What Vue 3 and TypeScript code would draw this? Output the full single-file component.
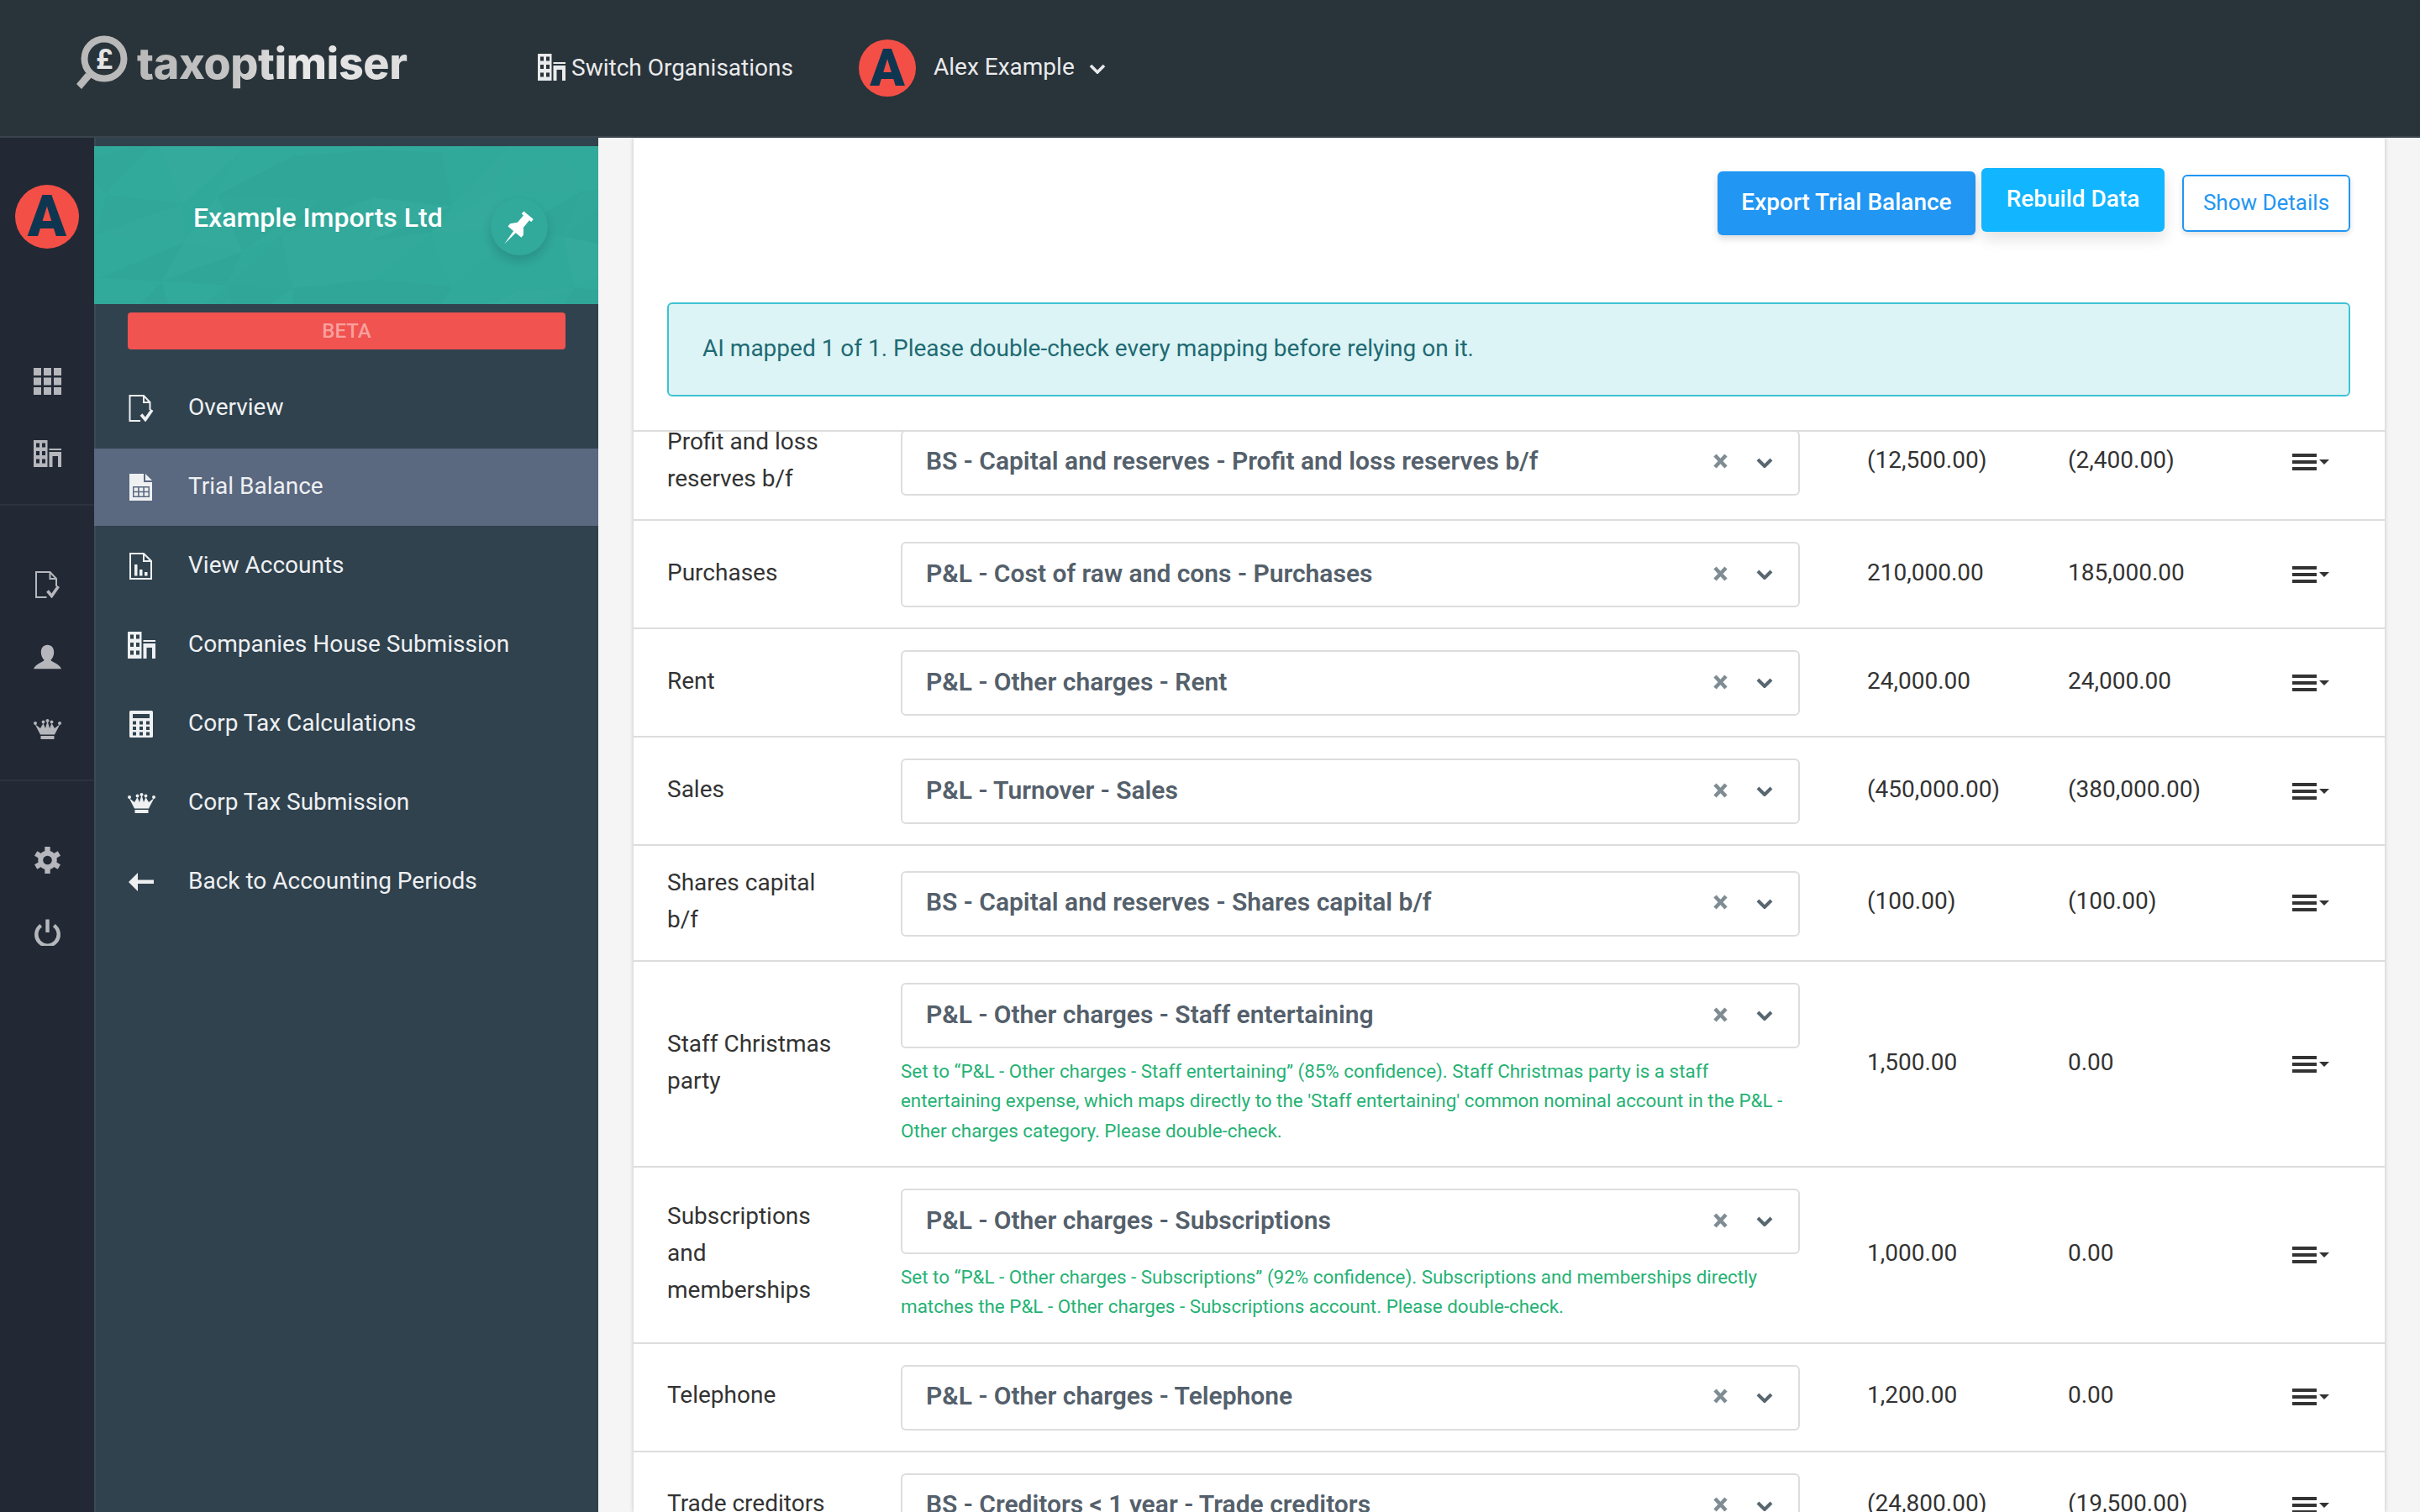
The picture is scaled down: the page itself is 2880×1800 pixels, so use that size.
<script setup lang="ts">
interface Row {
  label: string
  mapping: string
  current: string
  prior: string
  note?: string
}

const railTop = ['i-grid', 'i-building']
const railMid = ['i-doc-check', 'i-person', 'i-crown']
const railEnd = ['i-gear', 'i-power']

const navItems = [
  { label: 'Overview', icon: 'i-doc-check', w: 30, h: 32 },
  { label: 'Trial Balance', icon: 'i-doc-table', w: 30, h: 32, active: true },
  { label: 'View Accounts', icon: 'i-doc-chart', w: 30, h: 32 },
  { label: 'Companies House Submission', icon: 'i-building', w: 33, h: 32 },
  { label: 'Corp Tax Calculations', icon: 'i-calc', w: 30, h: 32 },
  { label: 'Corp Tax Submission', icon: 'i-crown', w: 33, h: 24 },
  { label: 'Back to Accounting Periods', icon: 'i-arrow', w: 30, h: 22 },
]

const rows: Row[] = [
  { label: 'Profit and loss reserves b/f', mapping: 'BS - Capital and reserves - Profit and loss reserves b/f', current: '(12,500.00)', prior: '(2,400.00)' },
  { label: 'Purchases', mapping: 'P&L - Cost of raw and cons - Purchases', current: '210,000.00', prior: '185,000.00' },
  { label: 'Rent', mapping: 'P&L - Other charges - Rent', current: '24,000.00', prior: '24,000.00' },
  { label: 'Sales', mapping: 'P&L - Turnover - Sales', current: '(450,000.00)', prior: '(380,000.00)' },
  { label: 'Shares capital b/f', mapping: 'BS - Capital and reserves - Shares capital b/f', current: '(100.00)', prior: '(100.00)' },
  {
    label: 'Staff Christmas party',
    mapping: 'P&L - Other charges - Staff entertaining',
    current: '1,500.00',
    prior: '0.00',
    note: "Set to “P&L - Other charges - Staff entertaining” (85% confidence). Staff Christmas party is a staff entertaining expense, which maps directly to the 'Staff entertaining' common nominal account in the P&L - Other charges category. Please double-check.",
  },
  {
    label: 'Subscriptions and memberships',
    mapping: 'P&L - Other charges - Subscriptions',
    current: '1,000.00',
    prior: '0.00',
    note: 'Set to “P&L - Other charges - Subscriptions” (92% confidence). Subscriptions and memberships directly matches the P&L - Other charges - Subscriptions account. Please double-check.',
  },
  { label: 'Telephone', mapping: 'P&L - Other charges - Telephone', current: '1,200.00', prior: '0.00' },
  { label: 'Trade creditors', mapping: 'BS - Creditors < 1 year - Trade creditors', current: '(24,800.00)', prior: '(19,500.00)' },
]

// low-poly texture behind the company name
function buildFacets() {
  let seed = 7
  const rnd = () => {
    seed = (seed * 16807) % 2147483647
    return seed / 2147483647
  }
  const pts: number[][][] = []
  for (let y = 0; y <= 4; y++) {
    const line: number[][] = []
    for (let x = 0; x <= 8; x++) {
      line.push([x * 80 - 20 + rnd() * 50, y * 55 - 14 + rnd() * 34])
    }
    pts.push(line)
  }
  const out: { points: string; fill: string }[] = []
  const shade = () => {
    const r = rnd()
    return r < 0.5 ? `rgba(255,255,255,${(r * 0.03).toFixed(3)})` : `rgba(0,60,50,${((r - 0.5) * 0.05).toFixed(3)})`
  }
  for (let y = 0; y < 4; y++) {
    for (let x = 0; x < 8; x++) {
      const [a, b, c, d] = [pts[y][x], pts[y][x + 1], pts[y + 1][x], pts[y + 1][x + 1]]
      out.push({ points: [a, b, c].map((p) => p.join(',')).join(' '), fill: shade() })
      out.push({ points: [b, d, c].map((p) => p.join(',')).join(' '), fill: shade() })
    }
  }
  return out
}
const facets = buildFacets()
</script>

<template>
  <svg class="sprite" aria-hidden="true">
    <defs>
      <symbol id="i-grid" viewBox="0 0 33 32">
        <path fill="currentColor" d="M0 0h9v9H0zM12 0h9v9h-9zM24 0h9v9h-9zM0 11.500h9v9H0zM12 11.500h9v9h-9zM24 11.500h9v9h-9zM0 23h9v9H0zM12 23h9v9h-9zM24 23h9v9h-9z" />
      </symbol>
      <symbol id="i-building" viewBox="0 0 33 32">
        <path fill="currentColor" fill-rule="evenodd" d="M0 0h16.500v32H0zM3 3.500v5h4v-5zM10 3.500v5h4v-5zM3 13v5h4v-5zM10 13v5h4v-5zM3 22.500v5h4v-5zM10 22.500v5h4v-5zM18.500 10H33v2H18.500zM18.500 14H33v18h-4V19h-6.500v13h-4z" />
      </symbol>
      <symbol id="i-doc-check" viewBox="0 0 30 32">
        <path fill="none" stroke="currentColor" stroke-width="2" d="M14 31H1.500V1H18l7.500 8v9M18 1v8h7.500" />
        <path fill="none" stroke="currentColor" stroke-width="3.600" d="M15 23.500l5 6 8-11.500" />
      </symbol>
      <symbol id="i-doc-table" viewBox="0 0 30 32">
        <path fill="currentColor" fill-rule="evenodd" d="M1 0h17v10h10v22H1zM20 0l8 8h-8zM5 15v13h20V15zM6.500 16.500h4.600v4.200H6.500zM12.700 16.500h4.600v4.200h-4.600zM18.900 16.500h4.600v4.200h-4.600zM6.500 22.300h4.600v4.200H6.500zM12.700 22.300h4.600v4.200h-4.600zM18.900 22.300h4.600v4.200h-4.600z" />
      </symbol>
      <symbol id="i-doc-chart" viewBox="0 0 30 32">
        <path fill="none" stroke="currentColor" stroke-width="2" d="M2 1h16l9 9v21H2zM18 1v9h9" />
        <path fill="currentColor" d="M7 14h3.500v13.500H7zM13 20h3.500v7.500H13zM19 23h3.500v4.500H19z" />
      </symbol>
      <symbol id="i-calc" viewBox="0 0 30 32">
        <path fill="currentColor" fill-rule="evenodd" d="M2.500 0h25A1.500 1.500 0 0 1 29 1.500v29a1.500 1.500 0 0 1-1.500 1.500h-25A1.500 1.500 0 0 1 1 30.500v-29A1.500 1.500 0 0 1 2.500 0zM5 4v5h20V4zM5 12.500v4h4v-4zM13 12.500v4h4v-4zM21 12.500v4h4v-4zM5 19v4h4v-4zM13 19v4h4v-4zM21 19v4h4v-4zM5 25.500v4h4v-4zM13 25.500v4h4v-4zM21 25.500v4h4v-4z" />
      </symbol>
      <symbol id="i-crown" viewBox="0 0 33 24">
        <path fill="currentColor" d="M1.500 6l6.500 12.500h17L31.500 6l-6.500 5-3.500-6-2.500 6-2.500-9-2.500 9-2.500-6L8 11zM8.500 20h16v4h-16z" />
        <circle fill="currentColor" cx="2" cy="5" r="2" />
        <circle fill="currentColor" cx="11.500" cy="3.500" r="1.900" />
        <circle fill="currentColor" cx="16.500" cy="2" r="2" />
        <circle fill="currentColor" cx="21.500" cy="3.500" r="1.900" />
        <circle fill="currentColor" cx="31" cy="5" r="2" />
      </symbol>
      <symbol id="i-arrow" viewBox="0 0 30 22">
        <path fill="currentColor" d="M0 11L11 0v8.500h19v4.500H11v9z" />
      </symbol>
      <symbol id="i-person" viewBox="0 0 30 26">
        <path fill="currentColor" d="M15 0c-4.500 0-7 3.500-7 8 0 4 1.700 6.800 3.500 8.500-1 2.500-9 3.500-11.500 9.500h30c-2.500-6-10.500-7-11.500-9.500C20.300 14.800 22 12 22 8c0-4.500-2.500-8-7-8z" />
      </symbol>
      <symbol id="i-gear" viewBox="0 0 30 30">
        <g fill="currentColor">
          <path fill-rule="evenodd" d="M15 4.500a10.500 10.500 0 1 1 0 21 10.500 10.500 0 0 1 0-21zM15 10a5 5 0 1 0 0 10 5 5 0 0 0 0-10z" />
          <rect x="12" y="0" width="6" height="6" />
          <rect x="12" y="24" width="6" height="6" />
          <rect x="12" y="0" width="6" height="6" transform="rotate(60 15 15)" />
          <rect x="12" y="24" width="6" height="6" transform="rotate(60 15 15)" />
          <rect x="12" y="0" width="6" height="6" transform="rotate(120 15 15)" />
          <rect x="12" y="24" width="6" height="6" transform="rotate(120 15 15)" />
        </g>
      </symbol>
      <symbol id="i-power" viewBox="0 0 30 28">
        <path fill="none" stroke="currentColor" stroke-width="4" d="M8 6.500a12 12 0 1 0 14 0M15 0v14" />
      </symbol>
      <symbol id="i-pin" viewBox="-4 -4 40 40">
        <g transform="rotate(40 16 16)">
          <path fill="currentColor" d="M9.500 -3h13v3.500h-2.500V10l5 6v3.500H7V16l5-6V.5H9.500zM14.500 19.500h3L16 36z" />
        </g>
      </symbol>
    </defs>
  </svg>

  <div class="page">
    <header class="topbar">
      <a class="logo">
        <svg class="logo-mark" viewBox="0 0 66 68" width="66" height="68">
          <circle cx="38" cy="29" r="23.500" fill="none" stroke="#b9b9b9" stroke-width="8" />
          <path d="M16 46l-11 13 6 6 12-14z" fill="#b9b9b9" />
          <text x="38" y="41" text-anchor="middle" class="logo-pound">£</text>
        </svg>
        <span class="logo-text">taxoptimiser</span>
      </a>
      <a class="top-link">
        <svg class="top-icon"><use href="#i-building" /></svg>
        <span>Switch Organisations</span>
      </a>
      <a class="user">
        <span class="avatar small">A</span>
        <span class="user-name">Alex Example</span>
        <svg class="user-caret" viewBox="0 0 20 12"><path d="M2 2l8 8 8-8" fill="none" stroke="currentColor" stroke-width="3.600" /></svg>
      </a>
    </header>

    <div class="shell">
      <aside class="rail">
        <div class="rail-avatar"><span class="avatar">A</span></div>
        <div class="rail-group first">
          <div v-for="icon in railTop" :key="icon" class="rail-slot"><svg class="rail-icon"><use :href="`#${icon}`" /></svg></div>
        </div>
        <div class="rail-group">
          <div v-for="icon in railMid" :key="icon" class="rail-slot"><svg class="rail-icon"><use :href="`#${icon}`" /></svg></div>
        </div>
        <div class="rail-group last">
          <div v-for="icon in railEnd" :key="icon" class="rail-slot"><svg class="rail-icon"><use :href="`#${icon}`" /></svg></div>
        </div>
      </aside>

      <nav class="sidebar">
        <div class="org">
          <svg class="org-facets" viewBox="0 0 600 188" preserveAspectRatio="none">
            <polygon v-for="(f, i) in facets" :key="i" :points="f.points" :fill="f.fill" />
          </svg>
          <span class="org-name">Example Imports Ltd</span>
          <button class="pin"><svg class="pin-icon"><use href="#i-pin" /></svg></button>
        </div>
        <div class="beta">BETA</div>
        <ul class="nav">
          <li v-for="item in navItems" :key="item.label" class="nav-item" :class="{ active: item.active }">
            <span class="nav-icon"><svg :width="item.w" :height="item.h"><use :href="`#${item.icon}`" /></svg></span>
            <span class="nav-label">{{ item.label }}</span>
          </li>
        </ul>
      </nav>

      <main class="main">
        <section class="card">
          <div class="actions">
            <button class="btn export">Export Trial Balance</button>
            <button class="btn rebuild">Rebuild Data</button>
            <button class="btn details">Show Details</button>
          </div>
          <div class="alert">AI mapped 1 of 1. Please double-check every mapping before relying on it.</div>
          <div class="table">
            <div v-for="row in rows" :key="row.label" class="row">
              <div class="cell-label">{{ row.label }}</div>
              <div class="cell-map">
                <div class="select">
                  <span class="select-value">{{ row.mapping }}</span>
                  <svg class="select-clear" viewBox="0 0 19 18"><path d="M3 2l13 14M16 2L3 16" fill="none" stroke="currentColor" stroke-width="4.500" /></svg>
                  <svg class="select-caret" viewBox="0 0 20 12"><path d="M2 2l8 8 8-8" fill="none" stroke="currentColor" stroke-width="4" /></svg>
                </div>
                <p v-if="row.note" class="note">{{ row.note }}</p>
              </div>
              <div class="cell-num">{{ row.current }}</div>
              <div class="cell-num">{{ row.prior }}</div>
              <div class="cell-menu">
                <span class="bars"><i></i><i></i><i></i></span>
                <span class="bars-caret"></span>
              </div>
            </div>
          </div>
        </section>
      </main>
    </div>
  </div>
</template>

<style>
html, body {
  margin: 0;
  background: #f5f5f5;
}
</style>

<style scoped>
.sprite {
  position: absolute;
  width: 0;
  height: 0;
}
.page {
  height: 1800px;
  display: flex;
  flex-direction: column;
  overflow: hidden;
  font-family: Roboto, "Liberation Sans", sans-serif;
  font-size: 28px;
  color: #333;
}
.topbar {
  flex: none;
  height: 162px;
  border-bottom: 2px solid #39444c;
  background: #29333a;
  display: flex;
  align-items: center;
  color: #e9eaeb;
}
.logo {
  display: flex;
  align-items: flex-start;
  height: 68px;
  margin-left: 86px;
  margin-top: -12px;
  width: 554px;
}
.logo-pound {
  font-family: Roboto, sans-serif;
  font-size: 34px;
  font-weight: 700;
  fill: #e4e4e4;
}
.logo-text {
  margin-left: 11px;
  margin-top: 1px;
  font-family: Inter, sans-serif;
  font-weight: 800;
  font-size: 52px;
  line-height: 68px;
  letter-spacing: -0.4px;
  background: linear-gradient(90deg, #b9b9b9 0%, #c4c4c4 35%, #e8e8e8 60%, #dcdcdc 100%);
  -webkit-background-clip: text;
  background-clip: text;
  color: transparent;
}
.top-link {
  display: flex;
  align-items: center;
  gap: 7px;
  margin-top: -2px;
  width: 382px;
}
.top-icon {
  width: 33px;
  height: 32px;
  flex: none;
}
.user {
  display: flex;
  align-items: center;
}
.avatar {
  width: 76px;
  height: 76px;
  border-radius: 50%;
  background: #f44f46;
  color: #0f3650;
  display: flex;
  align-items: center;
  justify-content: center;
  font-weight: 900;
  font-size: 68px;
  line-height: 76px;
}
.avatar.small {
  width: 68px;
  height: 68px;
  font-size: 61px;
  line-height: 68px;
}
.user-name {
  margin-left: 21px;
  margin-top: -3px;
}
.user-caret {
  width: 20px;
  height: 12px;
  margin-left: 17px;
  margin-top: 2px;
}
.shell {
  flex: 1;
  min-height: 0;
  display: flex;
}
.rail {
  flex: none;
  width: 112px;
  background: #222935;
  color: #b6b7bc;
}
.rail-avatar {
  height: 247px;
  display: flex;
  justify-content: center;
  padding-top: 56px;
  box-sizing: border-box;
}
.rail-group {
  padding: 51px 0 17px;
  border-bottom: 2px solid #2c333f;
}
.rail-group.first {
  padding-top: 0;
}
.rail-group.last {
  border-bottom: 0;
}
.rail-slot {
  height: 86px;
  display: flex;
  align-items: center;
  justify-content: center;
}
.rail-icon {
  width: 33px;
  height: 32px;
}
.sidebar {
  flex: none;
  width: 600px;
  box-sizing: border-box;
  background: #30424e;
  border-left: 2px solid #3a4a57;
  padding-top: 10px;
}
.org {
  position: relative;
  height: 188px;
  margin-left: -2px;
  background: #31a99b;
  box-sizing: border-box;
  padding: 64px 0 0 118px;
}
.org-facets {
  position: absolute;
  inset: 0;
  width: 100%;
  height: 100%;
}
.org-name {
  position: relative;
  display: block;
  color: #fff;
  font-size: 32px;
  font-weight: 500;
  line-height: 42px;
}
.pin {
  position: absolute;
  left: 472px;
  top: 62px;
  width: 68px;
  height: 68px;
  padding: 0;
  border: 0;
  border-radius: 50%;
  background: #31a99b;
  box-shadow: 0 6px 12px rgba(0, 0, 0, 0.14);
  color: #fff;
  display: flex;
  align-items: center;
  justify-content: center;
}
.pin-icon {
  width: 46px;
  height: 46px;
  margin: 6px 6px 0 0;
}
.beta {
  margin: 10px 39px 0 38px;
  height: 44px;
  border-radius: 4px;
  background: #f05350;
  color: #f9a09d;
  font-size: 24px;
  font-weight: 500;
  line-height: 44px;
  text-align: center;
}
.nav {
  list-style: none;
  margin: 24px 0 0 -2px;
  padding: 0;
}
.nav-item {
  height: 92px;
  margin-bottom: 2px;
  display: flex;
  align-items: center;
  color: #eef0f2;
}
.nav-item.active {
  background: #5a6880;
}
.nav-icon {
  width: 112px;
  flex: none;
  display: flex;
  justify-content: center;
}
.nav-icon svg {
  display: block;
}
.nav-label {
  margin-top: -4px;
}
.main {
  flex: 1;
  min-width: 0;
  padding: 0 42px;
}
.card {
  height: 100%;
  background: #fff;
  box-shadow: 0 0 5px rgba(0, 0, 0, 0.22);
  overflow: hidden;
}
.actions {
  display: flex;
  justify-content: flex-end;
  align-items: flex-start;
  padding: 36px 41px 0 0;
  height: 196px;
  box-sizing: border-box;
}
.btn {
  font-family: inherit;
  font-weight: 500;
  border-radius: 6px;
  cursor: pointer;
}
.export {
  width: 307px;
  height: 76px;
  margin-top: 4px;
  border: 0;
  background: #2196f3;
  color: #fff;
  font-size: 28px;
  padding: 0 0 4px;
  box-shadow: 0 4px 8px rgba(0, 0, 0, 0.15);
}
.rebuild {
  width: 218px;
  height: 76px;
  margin-left: 7px;
  border: 0;
  background: #12b5ff;
  color: #fff;
  font-size: 28px;
  padding: 0 0 4px;
  box-shadow: 0 8px 18px rgba(0, 0, 0, 0.12);
}
.details {
  width: 200px;
  height: 68px;
  margin-top: 8px;
  margin-left: 21px;
  border: 2px solid #2196f3;
  background: #fff;
  color: #2196f3;
  font-weight: 400;
  font-size: 26px;
  padding: 0 0 3px;
  box-shadow: 0 3px 6px rgba(0, 0, 0, 0.12);
}
.alert {
  margin: 0 41px 0 40px;
  height: 112px;
  box-sizing: border-box;
  border: 2px solid #3fc2d3;
  border-radius: 6px;
  background: #dcf4f6;
  color: #1f6a72;
  padding: 0 0 4px 40px;
  display: flex;
  align-items: center;
}
.table {
  margin-top: 40px;
  border-top: 2px solid #dddddd;
  overflow: hidden;
}
.row {
  display: grid;
  grid-template-columns: 278px 1150px 239px 267px auto;
  align-items: center;
  padding: 24px 0 24px 40px;
  border-bottom: 2px solid #dddddd;
}
.row:first-child {
  margin-top: -32px;
}
.cell-label {
  width: 220px;
  line-height: 44px;
  margin: -2px 0 2px;
}
.cell-map {
  width: 1070px;
  padding-top: 1px;
}
.select {
  height: 78px;
  box-sizing: border-box;
  border: 2px solid #dddddd;
  border-radius: 6px;
  display: flex;
  align-items: center;
  padding: 0 30px 0 28px;
  color: #54606b;
}
.select-value {
  flex: 1;
  font-size: 30px;
  font-weight: 600;
  margin-top: -4px;
}
.select-clear {
  width: 19px;
  height: 18px;
  color: #7f8c93;
  margin-top: -3px;
}
.select-caret {
  width: 20px;
  height: 12px;
  margin-left: 33px;
  color: #57666f;
}
.note {
  margin: 9.500px 0 0;
  color: #25b274;
  font-size: 22.400px;
  line-height: 35.500px;
}
.cell-num {
  margin: -2px 0 2px;
  line-height: 44px;
}
.cell-menu {
  display: flex;
  align-items: center;
}
.bars {
  display: flex;
  flex-direction: column;
  gap: 4px;
}
.bars i {
  display: block;
  width: 29px;
  height: 4px;
  background: #333;
}
.bars-caret {
  margin-left: 3px;
  border-left: 6px solid transparent;
  border-right: 6px solid transparent;
  border-top: 6px solid #333;
}
</style>
